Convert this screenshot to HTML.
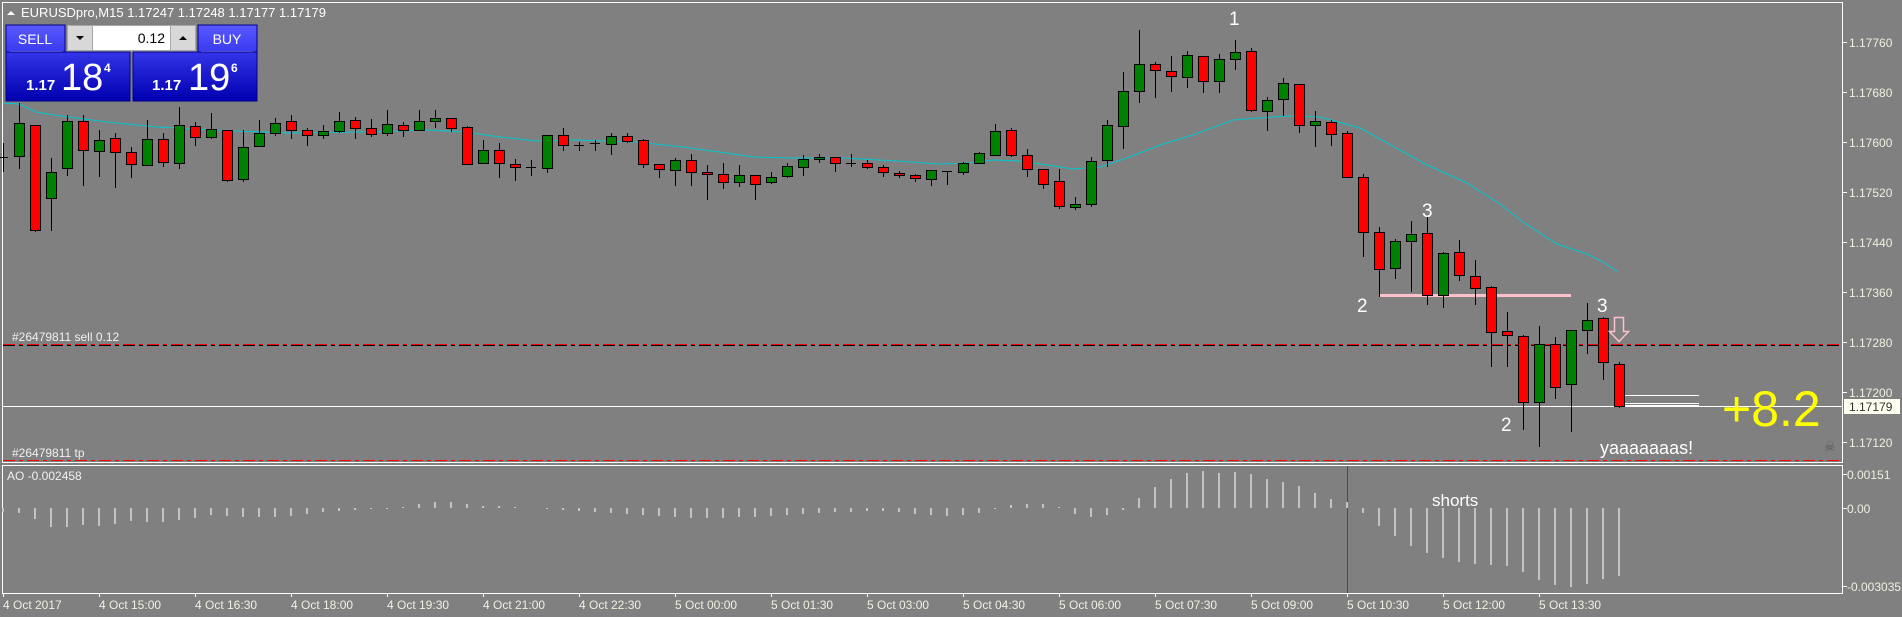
<!DOCTYPE html>
<html><head><meta charset="utf-8"><style>
html,body{margin:0;padding:0;background:#808080;}
body{width:1902px;height:617px;overflow:hidden;position:relative;font-family:"Liberation Sans",sans-serif;}
svg{position:absolute;left:0;top:0;}
.t{font-family:"Liberation Sans",sans-serif;}
</style></head><body>
<svg width="1902" height="617" viewBox="0 0 1902 617" xmlns="http://www.w3.org/2000/svg">
<rect width="1902" height="617" fill="#808080"/>
<g fill="none" stroke="#ffffff" stroke-width="1">
<path d="M2.5 2.5H1842.5V462.5H2.5Z"/>
<path d="M2.5 465.5H1842.5V593.5H2.5Z"/>
</g>
<g stroke="#ffffff" stroke-width="1">
<path d="M1843 42.5h4M1843 92.5h4M1843 142.5h4M1843 192.5h4M1843 242.5h4M1843 292.5h4M1843 342.5h4M1843 392.5h4M1843 442.5h4M1843 474.5h4M1843 508.5h4M1843 586.5h4"/>
<path d="M3.5 593v4M99.5 593v4M195.5 593v4M291.5 593v4M387.5 593v4M483.5 593v4M579.5 593v4M675.5 593v4M771.5 593v4M867.5 593v4M963.5 593v4M1059.5 593v4M1155.5 593v4M1251.5 593v4M1347.5 593v4M1443.5 593v4M1539.5 593v4"/>
</g>
<g class="t" font-size="12" fill="#f0f0e0">
<text x="1849" y="47">1.17760</text>
<text x="1849" y="97">1.17680</text>
<text x="1849" y="147">1.17600</text>
<text x="1849" y="197">1.17520</text>
<text x="1849" y="247">1.17440</text>
<text x="1849" y="297">1.17360</text>
<text x="1849" y="347">1.17280</text>
<text x="1849" y="397">1.17200</text>
<text x="1849" y="447">1.17120</text>
<text x="1847" y="479">0.00151</text>
<text x="1847" y="513">0.00</text>
<text x="1847" y="591">-0.003035</text>
</g>
<rect x="1844" y="399" width="56" height="15" fill="#fffff0"/>
<text x="1849" y="411" class="t" font-size="12" fill="#303030">1.17179</text>
<g class="t" font-size="12" fill="#f0f0e0">
<text x="3" y="609">4 Oct 2017</text>
<text x="99" y="609">4 Oct 15:00</text>
<text x="195" y="609">4 Oct 16:30</text>
<text x="291" y="609">4 Oct 18:00</text>
<text x="387" y="609">4 Oct 19:30</text>
<text x="483" y="609">4 Oct 21:00</text>
<text x="579" y="609">4 Oct 22:30</text>
<text x="675" y="609">5 Oct 00:00</text>
<text x="771" y="609">5 Oct 01:30</text>
<text x="867" y="609">5 Oct 03:00</text>
<text x="963" y="609">5 Oct 04:30</text>
<text x="1059" y="609">5 Oct 06:00</text>
<text x="1155" y="609">5 Oct 07:30</text>
<text x="1251" y="609">5 Oct 09:00</text>
<text x="1347" y="609">5 Oct 10:30</text>
<text x="1443" y="609">5 Oct 12:00</text>
<text x="1539" y="609">5 Oct 13:30</text>
</g>
<polyline fill="none" stroke="#00c8d0" stroke-width="1" points="3,103 19,104 36,112 54,115 107,122 157,127 214,130 286,133 357,132 429,130 464,132 500,137 536,141 576,140 636,142 683,147 719,152 754,157 790,158 844,158 897,161 940,164 969,163 993,160 1020,161 1047,165 1073,169 1100,167 1127,158 1160,145 1193,135 1233,120 1287,116 1320,117 1360,128 1400,150 1427,165 1467,183 1500,204 1523,222 1557,244 1587,254 1603,262 1618,272"/>
<path d="M3 345.5H1842" stroke="#000" stroke-width="1" stroke-dasharray="12 4 4 4"/>
<path d="M3 344.5H1842" stroke="#ff0000" stroke-width="1" stroke-dasharray="12 4 4 4"/>
<path d="M3 460.5H1842" stroke="#ff0000" stroke-width="1" stroke-dasharray="12 4 4 4"/>
<path d="M3 406.5H1842" stroke="#ffffff" stroke-width="1"/>
<path d="M1624 395.5H1699M1624 403.5H1699M1624 405.5H1699" stroke="#ffffff" stroke-width="1"/>
<rect x="1379" y="294" width="192" height="3" fill="#ffc0cb"/>
<path stroke="#000" stroke-width="1" fill="none" d="M3.5 143V172M0 157.5H8M19.5 103V169M35.5 125V232M51.5 158V231M67.5 115V176M83.5 115V186M99.5 130V177M115.5 133V188M131.5 147V178M147.5 120V165M163.5 133V167M179.5 107V169M195.5 122V146M211.5 113V139M227.5 130V182M243.5 130V182M259.5 120V147M275.5 118V136M291.5 115V139M307.5 128V146M323.5 125V139M339.5 112V133M355.5 117V139M371.5 119V137M387.5 110V136M403.5 122V137M419.5 110V130M435.5 110V128M451.5 118V132M467.5 126V164M483.5 140V163M499.5 143V178M515.5 159V181M531.5 160V176M526 167.5H536M547.5 135V173M563.5 128V151M579.5 142V151M574 145.5H584M595.5 140V151M590 143.5H600M611.5 133V155M627.5 133V143M643.5 139V168M659.5 164V178M675.5 158V186M691.5 154V186M707.5 165V200M723.5 163V189M739.5 165V187M755.5 175V200M771.5 172V184M787.5 163V178M803.5 155V176M819.5 154V163M835.5 157V172M851.5 154V167M846 163.5H856M867.5 160V169M883.5 165V177M899.5 171V178M915.5 174V182M931.5 170V186M947.5 171V185M942 171.5H952M963.5 162V175M979.5 152V163M995.5 124V155M1011.5 128V157M1027.5 149V177M1043.5 169V189M1059.5 169V209M1075.5 197V210M1091.5 157V207M1107.5 120V167M1123.5 72V149M1139.5 30V103M1155.5 62V98M1171.5 56V92M1187.5 51V88M1203.5 56V93M1219.5 54V93M1235.5 40V70M1251.5 48V112M1267.5 97V131M1283.5 78V116M1299.5 84V133M1315.5 111V147M1331.5 120V146M1347.5 131V177M1363.5 174V257M1379.5 227V297M1395.5 239V279M1411.5 221V292M1427.5 216V305M1443.5 252V308M1459.5 240V281M1475.5 260V305M1491.5 286V367M1507.5 312V367M1523.5 335V430M1539.5 326V447M1555.5 337V399M1571.5 330V432M1587.5 303V354M1603.5 317V380M1619.5 362V408"/>
<g fill="#008000" stroke="#000" stroke-width="1">
<rect x="14.5" y="123.5" width="10" height="33"/>
<rect x="46.5" y="172.5" width="10" height="26"/>
<rect x="62.5" y="121.5" width="10" height="47"/>
<rect x="94.5" y="140.5" width="10" height="11"/>
<rect x="142.5" y="139.5" width="10" height="26"/>
<rect x="174.5" y="125.5" width="10" height="38"/>
<rect x="206.5" y="129.5" width="10" height="8"/>
<rect x="238.5" y="147.5" width="10" height="32"/>
<rect x="254.5" y="133.5" width="10" height="13"/>
<rect x="270.5" y="123.5" width="10" height="10"/>
<rect x="318.5" y="131.5" width="10" height="4"/>
<rect x="334.5" y="121.5" width="10" height="10"/>
<rect x="382.5" y="124.5" width="10" height="9"/>
<rect x="414.5" y="121.5" width="10" height="9"/>
<rect x="430.5" y="118.5" width="10" height="3"/>
<rect x="478.5" y="150.5" width="10" height="13"/>
<rect x="542.5" y="135.5" width="10" height="33"/>
<rect x="606.5" y="136.5" width="10" height="8"/>
<rect x="670.5" y="160.5" width="10" height="10"/>
<rect x="734.5" y="175.5" width="10" height="7"/>
<rect x="766.5" y="177.5" width="10" height="5"/>
<rect x="782.5" y="166.5" width="10" height="10"/>
<rect x="798.5" y="159.5" width="10" height="8"/>
<rect x="814.5" y="157.5" width="10" height="2"/>
<rect x="926.5" y="170.5" width="10" height="9"/>
<rect x="958.5" y="163.5" width="10" height="9"/>
<rect x="974.5" y="153.5" width="10" height="10"/>
<rect x="990.5" y="131.5" width="10" height="24"/>
<rect x="1070.5" y="204.5" width="10" height="3"/>
<rect x="1086.5" y="161.5" width="10" height="43"/>
<rect x="1102.5" y="125.5" width="10" height="35"/>
<rect x="1118.5" y="91.5" width="10" height="35"/>
<rect x="1134.5" y="64.5" width="10" height="27"/>
<rect x="1182.5" y="55.5" width="10" height="22"/>
<rect x="1214.5" y="59.5" width="10" height="22"/>
<rect x="1230.5" y="52.5" width="10" height="7"/>
<rect x="1262.5" y="100.5" width="10" height="11"/>
<rect x="1278.5" y="83.5" width="10" height="16"/>
<rect x="1310.5" y="121.5" width="10" height="4"/>
<rect x="1390.5" y="241.5" width="10" height="27"/>
<rect x="1406.5" y="234.5" width="10" height="7"/>
<rect x="1438.5" y="253.5" width="10" height="42"/>
<rect x="1534.5" y="344.5" width="10" height="58"/>
<rect x="1566.5" y="330.5" width="10" height="54"/>
<rect x="1582.5" y="320.5" width="10" height="10"/>
</g>
<g fill="#ff0000" stroke="#000" stroke-width="1">
<rect x="30.5" y="125.5" width="10" height="105"/>
<rect x="78.5" y="121.5" width="10" height="29"/>
<rect x="110.5" y="138.5" width="10" height="14"/>
<rect x="126.5" y="152.5" width="10" height="12"/>
<rect x="158.5" y="139.5" width="10" height="23"/>
<rect x="190.5" y="126.5" width="10" height="11"/>
<rect x="222.5" y="130.5" width="10" height="50"/>
<rect x="286.5" y="121.5" width="10" height="9"/>
<rect x="302.5" y="130.5" width="10" height="5"/>
<rect x="350.5" y="120.5" width="10" height="8"/>
<rect x="366.5" y="128.5" width="10" height="6"/>
<rect x="398.5" y="125.5" width="10" height="5"/>
<rect x="446.5" y="118.5" width="10" height="10"/>
<rect x="462.5" y="127.5" width="10" height="37"/>
<rect x="494.5" y="150.5" width="10" height="13"/>
<rect x="510.5" y="164.5" width="10" height="3"/>
<rect x="558.5" y="135.5" width="10" height="10"/>
<rect x="622.5" y="136.5" width="10" height="5"/>
<rect x="638.5" y="140.5" width="10" height="24"/>
<rect x="654.5" y="164.5" width="10" height="5"/>
<rect x="686.5" y="160.5" width="10" height="12"/>
<rect x="702.5" y="172.5" width="10" height="2"/>
<rect x="718.5" y="174.5" width="10" height="8"/>
<rect x="750.5" y="175.5" width="10" height="9"/>
<rect x="830.5" y="157.5" width="10" height="6"/>
<rect x="862.5" y="163.5" width="10" height="4"/>
<rect x="878.5" y="167.5" width="10" height="5"/>
<rect x="894.5" y="173.5" width="10" height="2"/>
<rect x="910.5" y="175.5" width="10" height="3"/>
<rect x="1006.5" y="130.5" width="10" height="25"/>
<rect x="1022.5" y="155.5" width="10" height="14"/>
<rect x="1038.5" y="169.5" width="10" height="15"/>
<rect x="1054.5" y="181.5" width="10" height="25"/>
<rect x="1150.5" y="64.5" width="10" height="6"/>
<rect x="1166.5" y="71.5" width="10" height="5"/>
<rect x="1198.5" y="56.5" width="10" height="25"/>
<rect x="1246.5" y="51.5" width="10" height="59"/>
<rect x="1294.5" y="84.5" width="10" height="41"/>
<rect x="1326.5" y="122.5" width="10" height="12"/>
<rect x="1342.5" y="133.5" width="10" height="44"/>
<rect x="1358.5" y="177.5" width="10" height="55"/>
<rect x="1374.5" y="232.5" width="10" height="37"/>
<rect x="1422.5" y="233.5" width="10" height="62"/>
<rect x="1454.5" y="252.5" width="10" height="23"/>
<rect x="1470.5" y="276.5" width="10" height="12"/>
<rect x="1486.5" y="287.5" width="10" height="45"/>
<rect x="1502.5" y="331.5" width="10" height="4"/>
<rect x="1518.5" y="336.5" width="10" height="66"/>
<rect x="1550.5" y="344.5" width="10" height="43"/>
<rect x="1598.5" y="318.5" width="10" height="44"/>
<rect x="1614.5" y="364.5" width="10" height="42"/>
</g>
<path d="M1614.5 317.5H1623.5V331.5H1628.5L1619 341.5L1609.5 331.5H1614.5Z" fill="none" stroke="#ffc0cb" stroke-width="1.5"/>
<g class="t" fill="#ffffff" font-size="19">
<text x="1229" y="25">1</text>
<text x="1422" y="217">3</text>
<text x="1357" y="312">2</text>
<text x="1597" y="312">3</text>
<text x="1501" y="431">2</text>
</g>
<text x="1600" y="454" class="t" font-size="18" fill="#ffffff">yaaaaaaas!</text>
<text x="1722" y="426" class="t" font-size="50" fill="#ffff00">+8.2</text>
<text x="1824" y="451" font-size="13" fill="#5a5a5a" font-family="DejaVu Sans,sans-serif">☠</text>
<g class="t" font-size="12" fill="#f0f0f0">
<text x="12" y="341">#26479811 sell 0.12</text>
<text x="12" y="457">#26479811 tp</text>
<text x="7" y="480">AO -0.002458</text>
</g>
<text x="1432" y="506" class="t" font-size="17" fill="#ffffff">shorts</text>
<path d="M1347.5 466V593" stroke="#ff0000" stroke-width="1"/>
<path stroke="#c4c4c4" stroke-width="2" fill="none" d="M3 508V512M19 508V513M35 508V519M51 508V527M67 508V527M83 508V525M99 508V526M115 508V524M131 508V521M147 508V522M163 508V522M179 508V520M195 508V518M211 508V515M227 508V516M243 508V517M259 508V517M275 508V517M291 508V516M307 508V514M323 508V512M339 508V511M355 508V510M371 508V509M387 508V509M403 508V507M419 508V504M435 508V502M451 508V502M467 508V504M483 508V506M499 508V506M515 508V507M547 508V509M563 508V510M579 508V511M595 508V512M611 508V513M627 508V514M643 508V515M659 508V516M675 508V517M691 508V518M707 508V518M723 508V518M739 508V517M755 508V517M771 508V516M787 508V515M803 508V514M819 508V513M835 508V512M851 508V512M867 508V511M883 508V511M899 508V512M915 508V514M931 508V515M947 508V516M963 508V515M979 508V513M995 508V509M1011 508V505M1027 508V504M1043 508V504M1059 508V507M1075 508V514M1091 508V517M1107 508V515M1123 508V510M1139 508V498M1155 508V487M1171 508V479M1187 508V473M1203 508V471M1219 508V473M1235 508V472M1251 508V474M1267 508V479M1283 508V482M1299 508V486M1315 508V493M1331 508V499M1347 508V502M1363 508V513M1379 508V526M1395 508V536M1411 508V546M1427 508V553M1443 508V558M1459 508V562M1475 508V564M1491 508V565M1507 508V566M1523 508V572M1539 508V580M1555 508V585M1571 508V587M1587 508V584M1603 508V579M1619 508V576"/>
<path d="M7 15H15L11 11Z" fill="#ffffff"/>
<text x="21" y="17" class="t" font-size="13" fill="#ffffff">EURUSDpro,M15  1.17247 1.17248 1.17177 1.17179</text>
<defs>
<linearGradient id="bt" x1="0" y1="0" x2="0" y2="1"><stop offset="0" stop-color="#5a5aff"/><stop offset="1" stop-color="#3a3af0"/></linearGradient>
<linearGradient id="bb" x1="0" y1="0" x2="0" y2="1"><stop offset="0" stop-color="#3434e8"/><stop offset="1" stop-color="#0000b0"/></linearGradient>
</defs>
<rect x="6" y="25" width="59" height="27" fill="url(#bt)" stroke="#00008a" stroke-width="1"/>
<rect x="198" y="25" width="59" height="27" fill="url(#bt)" stroke="#00008a" stroke-width="1"/>
<path d="M10 51.5H62M201 51.5H253" stroke="#9a9aff" stroke-width="1"/>
<rect x="67" y="25" width="129" height="27" fill="#a8a8a8"/>
<rect x="68" y="26" width="24" height="24" fill="#d8d8d8"/>
<rect x="93" y="26" width="77" height="24" fill="#ffffff"/>
<rect x="171" y="26" width="24" height="24" fill="#d8d8d8"/>
<path d="M76 36H84L80 40Z" fill="#000"/>
<path d="M179 40H187L183 36Z" fill="#000"/>
<text x="165" y="43" class="t" font-size="14" fill="#000" text-anchor="end">0.12</text>
<text x="35" y="44" class="t" font-size="14" fill="#ffffff" text-anchor="middle">SELL</text>
<text x="227" y="44" class="t" font-size="14" fill="#ffffff" text-anchor="middle">BUY</text>
<rect x="6" y="52" width="124" height="49" fill="url(#bb)" stroke="#00008a" stroke-width="1"/>
<rect x="133" y="52" width="124" height="49" fill="url(#bb)" stroke="#00008a" stroke-width="1"/>
<g class="t" fill="#ffffff">
<text x="26" y="90" font-size="15" font-weight="bold">1.17</text>
<text x="61" y="90" font-size="38">18</text>
<text x="104" y="72" font-size="12" font-weight="bold">4</text>
<text x="152" y="90" font-size="15" font-weight="bold">1.17</text>
<text x="188" y="90" font-size="38">19</text>
<text x="231" y="72" font-size="12" font-weight="bold">6</text>
</g>
</svg>
</body></html>
